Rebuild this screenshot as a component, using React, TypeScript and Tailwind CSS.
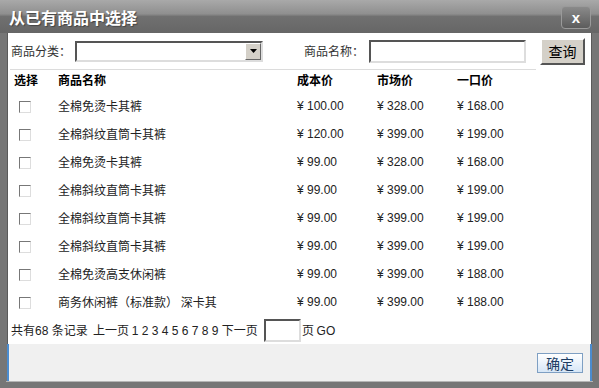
import React from "react";

type Row = { name: string; cost: string; market: string; once: string };

const rows: Row[] = [
  { name: "全棉免烫卡其裤", cost: "100.00", market: "328.00", once: "168.00" },
  { name: "全棉斜纹直筒卡其裤", cost: "120.00", market: "399.00", once: "199.00" },
  { name: "全棉免烫卡其裤", cost: "99.00", market: "328.00", once: "168.00" },
  { name: "全棉斜纹直筒卡其裤", cost: "99.00", market: "399.00", once: "199.00" },
  { name: "全棉斜纹直筒卡其裤", cost: "99.00", market: "399.00", once: "199.00" },
  { name: "全棉斜纹直筒卡其裤", cost: "99.00", market: "399.00", once: "199.00" },
  { name: "全棉免烫高支休闲裤", cost: "99.00", market: "399.00", once: "188.00" },
  { name: "商务休闲裤（标准款） 深卡其", cost: "99.00", market: "399.00", once: "188.00" },
];

const cjk = "font-['SimSun','Noto_Sans_CJK_SC',sans-serif]";
const num = "font-['Liberation_Sans','Noto_Sans_CJK_SC',sans-serif]";

export default function App() {
  return (
    <div className={`h-[388px] w-[599px] overflow-hidden bg-[#767676] text-[12px] text-[#222] ${cjk}`}>
      {/* 标题栏 */}
      <div className="flex h-[33px] items-center justify-between bg-[linear-gradient(#a9a9a9_0%,#8f8f8f_42%,#707070_50%,#666666_100%)] pl-[9px] pr-[8px]">
        <span className="text-[16px] font-bold leading-none text-white [text-shadow:1px_1px_1px_#444]">从已有商品中选择</span>
        <button className="mt-[1px] flex h-[23px] w-[30px] items-center justify-center rounded-[4px] border border-[#9a9a9a] bg-[linear-gradient(#8a8a8a,#5c5c5c)] font-['Liberation_Sans',sans-serif] text-[15px] font-bold leading-none text-white">
          x
        </button>
      </div>

      <div className="ml-[7px] w-[585px] border-l border-r border-[#5a5a5a] bg-white">
        {/* 检索 */}
        <div className="flex h-[36px] items-center pl-[3px] text-[#333]">
          <span className="w-[64px]">商品分类：</span>
          <div className="flex h-[21px] w-[188px] border-2 border-t-[#555] border-l-[#555] border-b-[#ddd] border-r-[#ddd] bg-white">
            <div className="flex-1" />
            <div className="flex w-[16px] items-center justify-center border border-t-[#fff] border-l-[#fff] border-b-[#666] border-r-[#666] bg-[#d4d0c8]">
              <svg width="7" height="4" viewBox="0 0 7 4"><path d="M0 0h7L3.5 4z" fill="#000" /></svg>
            </div>
          </div>
          <span className="ml-[41px] w-[65px]">商品名称：</span>
          <div className="h-[23px] w-[157px] border-2 border-t-[#555] border-l-[#555] border-b-[#ddd] border-r-[#ddd] bg-white" />
          <button className="ml-[14px] h-[27px] w-[45px] border-2 border-t-[#fff] border-l-[#fff] border-b-[#555] border-r-[#555] bg-[#d4d0c8] text-[14px] leading-none text-black">
            查询
          </button>
        </div>
        <div className="ml-[2px] h-px w-[526px] bg-[#dcdcdc]" />

        {/* 表头 */}
        <div className="grid h-[20px] grid-cols-[44px_239px_80px_80px_1fr] items-center pl-[6px] font-bold text-black">
          <span>选择</span>
          <span>商品名称</span>
          <span>成本价</span>
          <span>市场价</span>
          <span>一口价</span>
        </div>

        <div className="mt-[2px]">
          {rows.map((r, i) => (
            <div key={i} className="grid h-[28px] grid-cols-[44px_239px_80px_80px_1fr] items-center pl-[6px] text-[#222]">
              <span className="ml-[5px] mt-[2px] h-[12px] w-[12px] border border-t-[#777] border-l-[#777] border-b-[#ddd] border-r-[#ddd] bg-white" />
              <span>{r.name}</span>
              <span className={num}>¥ {r.cost}</span>
              <span className={num}>¥ {r.market}</span>
              <span className={num}>¥ {r.once}</span>
            </div>
          ))}
        </div>

        {/* 分页 */}
        <div className="flex h-[28px] items-center pl-[3px] text-[#222]">
          <span className="whitespace-pre">共有<span className={num}>68 </span>条记录  上一页 <span className={num}>1 2 3 4 5 6 7 8 9 </span>下一页</span>
          <div className="ml-[6px] h-[23px] w-[37px] border-2 border-t-[#555] border-l-[#555] border-b-[#ddd] border-r-[#ddd] bg-white" />
          <span className="ml-[1px]">页 <span className={num}>GO</span></span>
        </div>
      </div>

      {/* 底部按钮 */}
      <div className="ml-[7px] flex h-[37px] w-[585px] items-center justify-end border-l-2 border-r-2 border-[#4b8ccf] bg-[#f0f0f0] pr-[7px]">
        <button className="h-[20px] w-[46px] border border-[#7e9fc3] bg-[linear-gradient(#ffffff,#d6e6f7)] text-[14px] leading-none text-[#1c3c62]">
          确定
        </button>
      </div>
      <div className="ml-[6px] h-px w-[587px] bg-[#b5b5b5]" />
    </div>
  );
}
